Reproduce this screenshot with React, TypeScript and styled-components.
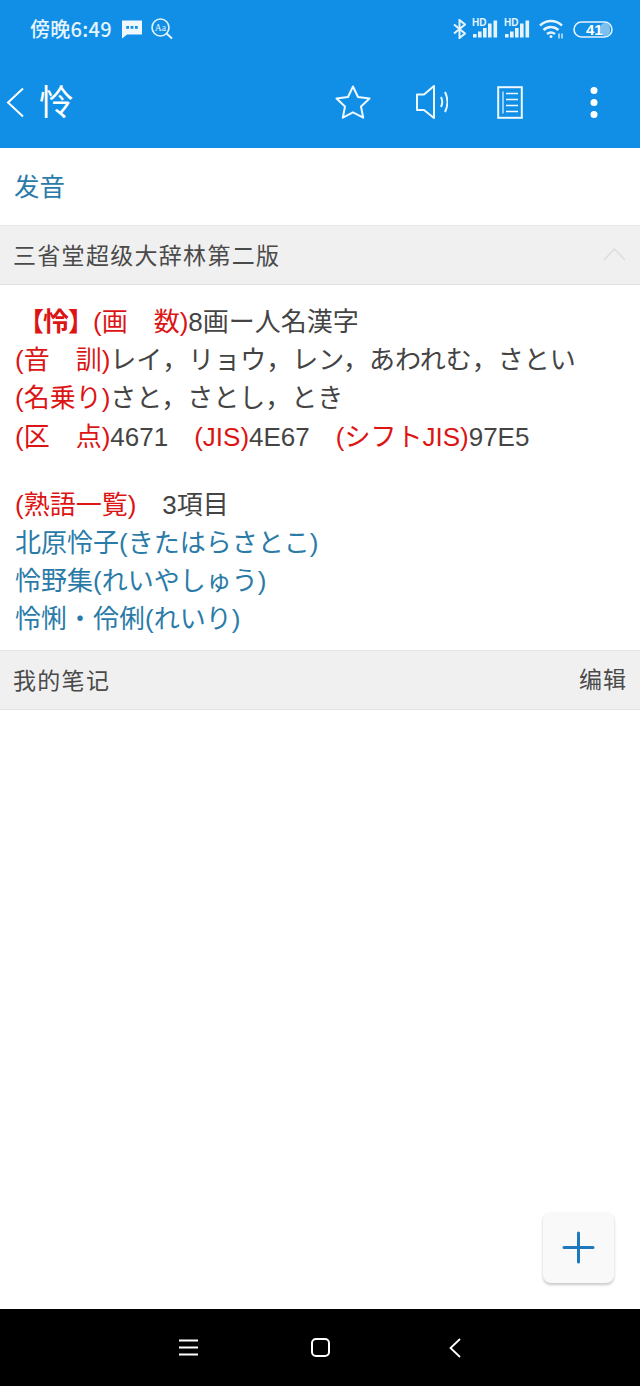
import type { ReactNode } from 'react';
import { createGlobalStyle, styled } from 'styled-components';

const CJK = '"Liberation Sans", "Noto Sans CJK JP", sans-serif';

const GlobalStyle = createGlobalStyle`
  * {
    box-sizing: border-box;
  }
  html, body {
    margin: 0;
    padding: 0;
    background: #fff;
  }
  body {
    font-family: ${CJK};
  }
`;

const Page = styled.div`
  position: relative;
  width: 640px;
  height: 1386px;
  display: flex;
  flex-direction: column;
  overflow: hidden;
  background: #fff;
`;

const Header = styled.header`
  height: 148px;
  flex: none;
  display: flex;
  flex-direction: column;
  background: #118fe6;
  color: #fff;
`;

const StatusBar = styled.div`
  height: 58px;
  padding: 0 27px 0 30px;
  display: flex;
  align-items: center;
  justify-content: space-between;
`;

const StatusGroup = styled.div<{ $gap: number }>`
  display: flex;
  align-items: center;
  gap: ${(p) => p.$gap}px;
`;

const Clock = styled.span`
  font-family: "Noto Sans CJK SC", sans-serif;
  font-size: 20px;
  font-weight: 500;
  line-height: 1;
  letter-spacing: 0.3px;
  color: #e6f4fe;
  margin-right: 1px;
`;

const WifiSlot = styled.span`
  display: flex;
  margin: 0 3px;
`;

const Toolbar = styled.div`
  height: 90px;
  padding: 0 0 2px 6px;
  display: flex;
  align-items: center;
`;

const Title = styled.h1`
  flex: 1;
  margin: -6px 0 0 14px;
  font-family: "Noto Sans CJK SC", sans-serif;
  font-size: 35px;
  font-weight: 400;
  line-height: 1;
`;

const ToolSlot = styled.span<{ $width: number }>`
  width: ${(p) => p.$width}px;
  display: flex;
  justify-content: center;
`;

const PronounceRow = styled.div`
  height: 77px;
  flex: none;
  padding: 0 0 5px 14px;
  display: flex;
  align-items: center;
  font-size: 25.5px;
  color: #2b7ba8;
`;

const SectionBar = styled.div`
  height: 60px;
  flex: none;
  padding: 0 14px 2px 13px;
  display: flex;
  align-items: center;
  justify-content: space-between;
  background: #f0f0f0;
  border-top: 1px solid #e6e6e6;
  border-bottom: 1px solid #e2e2e2;
  font-size: 23px;
  letter-spacing: 1.3px;
  color: #4a4a4a;
`;

const EditLink = styled.span`
  margin: -3px -1px 0 0;
  letter-spacing: 1px;
`;

const Entry = styled.div`
  flex: none;
  height: 365px;
  padding: 18px 15px 0;
  font-size: 26px;
  line-height: 38.2px;
  color: #444;
`;

const Line = styled.div`
  white-space: pre;
`;

const Label = styled.span`
  color: #dc1414;
`;

const Headword = styled.b`
  margin-left: 3px;
  letter-spacing: -1px;
  color: #dc1414;
  font-weight: 700;
`;

const Gap = styled.div`
  height: 30px;
`;

const WordLink = styled.div`
  color: #2b7ba8;
  white-space: pre;
`;

const Blank = styled.div`
  flex: 1;
  background: #fff;
`;

const AddButton = styled.button`
  position: absolute;
  left: 543px;
  top: 1212px;
  width: 71px;
  height: 71px;
  padding: 0;
  border: none;
  border-radius: 8px;
  background: #f9f9f9;
  box-shadow: 0 2px 3px rgba(0, 0, 0, 0.22);
  display: flex;
  align-items: center;
  justify-content: center;
`;

const NavBar = styled.nav`
  height: 77px;
  flex: none;
  background: #000;
  display: flex;
  align-items: center;
  justify-content: center;
  gap: 113px;
`;

const BackSlot = styled.span`
  display: flex;
  margin-left: 6px;
`;

const Bluetooth = () => (
  <svg width="13" height="20" viewBox="0 0 13 20" fill="none" stroke="#e6f4fe" strokeWidth="2">
    <path d="M1 5.500 12 14.500 6.500 19V1L12 5.500 1 14.500" />
  </svg>
);

const Signal = () => (
  <svg width="26" height="27" viewBox="0 -3 26 27" fill="#e6f4fe">
    <rect x="1" y="15" width="3.600" height="3.500" />
    <rect x="6" y="12.500" width="3.600" height="6" />
    <rect x="11" y="9" width="3.600" height="9.500" />
    <rect x="16" y="4.500" width="3.600" height="14" />
    <rect x="21.500" y="1.500" width="3.600" height="17" />
    <text x="0" y="7" fontFamily="Liberation Sans" fontSize="10" fontWeight="700">
      HD
    </text>
  </svg>
);

const Wifi = () => (
  <svg width="25" height="20" viewBox="0 0 25 20" fill="none" stroke="#e6f4fe" strokeWidth="2.400">
    <path d="M1 6.500c6.500-6 15.500-6 22 0" />
    <path d="M4.500 11c4.500-4 10.500-4 15 0" />
    <path d="M8 15c2.500-2 5.500-2 8 0" />
    <circle cx="12" cy="17.500" r="1.500" fill="#e6f4fe" stroke="none" />
    <path d="M20 14.500v5M23 14.500v5" strokeWidth="1.300" />
  </svg>
);

const Battery = () => (
  <svg width="40" height="17" viewBox="0 0 40 17">
    <rect x="27" y="2" width="10" height="13" rx="5" fill="#7cc0f0" />
    <rect x="1" y="1" width="38" height="15" rx="7.500" fill="none" stroke="#e6f4fe" strokeWidth="1.600" />
    <text x="13" y="14" fontFamily="Liberation Sans" fontSize="15" fontWeight="700" fill="#fff">
      41
    </text>
  </svg>
);

const MessageIcon = () => (
  <svg width="20" height="20" viewBox="0 0 20 20" fill="#f0f8ff">
    <path d="M0 1.500h20v14H5L0 19.500z" />
    <rect x="4.200" y="7" width="2.800" height="2.800" fill="#118fe6" />
    <rect x="8.600" y="7" width="2.800" height="2.800" fill="#118fe6" />
    <rect x="13" y="7" width="2.800" height="2.800" fill="#118fe6" />
  </svg>
);

const LookupIcon = () => (
  <svg width="22" height="22" viewBox="0 0 22 22" fill="none" stroke="#e6f4fe" strokeWidth="1.600">
    <circle cx="9.500" cy="9.500" r="8.500" />
    <path d="M15.500 15.500 21 20.500" strokeWidth="2" />
    <text x="3.800" y="13" fontFamily="Liberation Serif" fontSize="9.500" fill="#e6f4fe" stroke="none">
      Aa
    </text>
  </svg>
);

const Chevron = () => (
  <svg width="19" height="31" viewBox="0 0 19 31" fill="none" stroke="#fff" strokeWidth="2">
    <path d="M17 1.500 2 15.500l15 14" />
  </svg>
);

const StarIcon = () => (
  <svg width="36" height="34" viewBox="0 0 36 34" fill="none" stroke="#eef8ff" strokeWidth="2" strokeLinejoin="round">
    <path d="M18 1.500l5 10.500 11.500 1.500-8.500 8 2.200 11.200L18 27.300 7.800 32.700 10 21.500 1.500 13.500 13 12z" />
  </svg>
);

const SpeakerIcon = () => (
  <svg width="32" height="34" viewBox="0 0 32 34" fill="none" stroke="#eef8ff" strokeWidth="2" strokeLinejoin="round">
    <path d="M1 9.500h7L18 1v32L8 25H1z" />
    <path d="M25 12c1.500 3 1.500 7 0 10" />
    <path d="M29 7c3 6 3 14 0 20" />
  </svg>
);

const NotesIcon = () => (
  <svg width="26" height="33" viewBox="0 0 26 33" fill="none" stroke="#eef8ff" strokeWidth="2">
    <rect x="1.200" y="1.200" width="23.600" height="30.600" />
    <path d="M6 5.500v22" strokeWidth="1.200" />
    <path d="M9 7.500h12M9 13.500h12M9 19.500h12M9 25.500h12" strokeWidth="1.600" />
  </svg>
);

const MoreIcon = () => (
  <svg width="8" height="33" viewBox="0 0 8 33" fill="#fff">
    <circle cx="4" cy="4.500" r="3.500" />
    <circle cx="4" cy="16.500" r="3.500" />
    <circle cx="4" cy="28.500" r="3.500" />
  </svg>
);

const CollapseIcon = () => (
  <svg width="23" height="14" viewBox="0 0 23 14" fill="none" stroke="#dcdcdc" strokeWidth="1.500">
    <path d="M1 13 11.500 2 22 13" />
  </svg>
);

const PlusIcon = () => (
  <svg width="33" height="33" viewBox="0 0 33 33" stroke="#1d79bb" strokeWidth="3" strokeLinecap="round">
    <path d="M16.500 2v29M2 16.500h29" />
  </svg>
);

const MenuIcon = () => (
  <svg width="19" height="17" viewBox="0 0 19 17" stroke="#fff" strokeWidth="1.800">
    <path d="M0 1.500h19M0 8.500h19M0 15.500h19" />
  </svg>
);

const HomeIcon = () => (
  <svg width="19" height="19" viewBox="0 0 19 19" fill="none" stroke="#fff" strokeWidth="2">
    <rect x="1" y="1" width="17" height="17" rx="4" />
  </svg>
);

const BackIcon = () => (
  <svg width="12" height="20" viewBox="0 0 12 20" fill="none" stroke="#fff" strokeWidth="1.800">
    <path d="M11 1 1.500 10 11 19" />
  </svg>
);

const tools: { width: number; icon: ReactNode }[] = [
  { width: 78, icon: <StarIcon /> },
  { width: 80, icon: <SpeakerIcon /> },
  { width: 76, icon: <NotesIcon /> },
  { width: 92, icon: <MoreIcon /> },
];

export default function App() {
  return (
    <Page>
      <GlobalStyle />
      <Header>
        <StatusBar>
          <StatusGroup $gap={9}>
            <Clock>傍晚6:49</Clock>
            <MessageIcon />
            <LookupIcon />
          </StatusGroup>
          <StatusGroup $gap={6}>
            <Bluetooth />
            <Signal />
            <Signal />
            <WifiSlot>
              <Wifi />
            </WifiSlot>
            <Battery />
          </StatusGroup>
        </StatusBar>
        <Toolbar>
          <Chevron />
          <Title>怜</Title>
          {tools.map((tool) => (
            <ToolSlot key={tool.width} $width={tool.width}>
              {tool.icon}
            </ToolSlot>
          ))}
        </Toolbar>
      </Header>
      <PronounceRow>发音</PronounceRow>
      <SectionBar>
        <span>三省堂超级大辞林第二版</span>
        <CollapseIcon />
      </SectionBar>
      <Entry>
        <Line>
          <Headword>【怜】</Headword>
          <Label>(画　数)</Label>8画ー人名漢字
        </Line>
        <Line>
          <Label>(音　訓)</Label>レイ，リョウ，レン，あわれむ，さとい
        </Line>
        <Line>
          <Label>(名乗り)</Label>さと，さとし，とき
        </Line>
        <Line>
          <Label>(区　点)</Label>4671　<Label>(JIS)</Label>4E67　<Label>(シフトJIS)</Label>97E5
        </Line>
        <Gap />
        <Line>
          <Label>(熟語一覧)</Label>　3項目
        </Line>
        <WordLink>北原怜子(きたはらさとこ)</WordLink>
        <WordLink>怜野集(れいやしゅう)</WordLink>
        <WordLink>怜悧・伶俐(れいり)</WordLink>
      </Entry>
      <SectionBar>
        <span>我的笔记</span>
        <EditLink>编辑</EditLink>
      </SectionBar>
      <Blank />
      <AddButton aria-label="add">
        <PlusIcon />
      </AddButton>
      <NavBar>
        <MenuIcon />
        <HomeIcon />
        <BackSlot>
          <BackIcon />
        </BackSlot>
      </NavBar>
    </Page>
  );
}
